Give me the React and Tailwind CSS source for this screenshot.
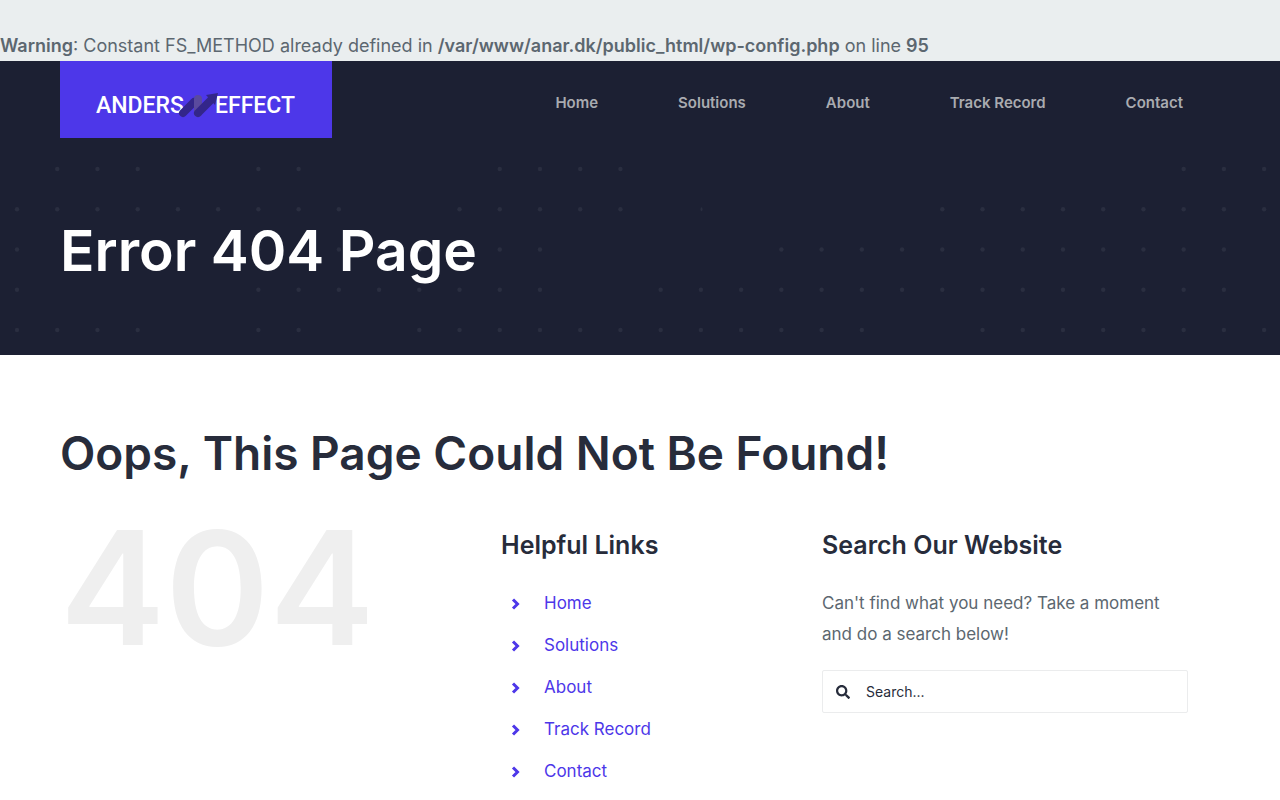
import { FaSearch } from 'react-icons/fa';

const LINKS = ['Home', 'Solutions', 'About', 'Track Record', 'Contact'];

// Dot columns per row of the title bar pattern, as [first, last] ranges
const DOT_ROWS = [
  [[1, 3], [6, 7], [12, 15], [29, 31]],
  [[0, 8], [11, 15], [23, 31]],
  [[0, 0], [6, 13], [19, 30]],
  [[0, 0], [6, 13], [16, 30]],
  [[0, 3], [6, 7], [10, 21], [24, 31]],
];

function DotPattern() {
  return (
    <svg
      viewBox="0 0 1280 294"
      preserveAspectRatio="xMidYMid slice"
      className="absolute inset-0 w-full h-full"
      aria-hidden="true"
    >
      {DOT_ROWS.map((ranges, row) =>
        ranges.map(([first, last]) =>
          Array.from({ length: last - first + 1 }, (_, i) => (
            <circle
              key={`${row}-${first + i}`}
              cx={17 + (first + i) * 40.23}
              cy={108 + row * 40.25}
              r="2.2"
              fill="#2a2e40"
            />
          ))
        )
      )}
      <ellipse cx="701.5" cy="148.2" rx="1" ry="2" fill="#2a2e40" />
    </svg>
  );
}

function Chevron() {
  return (
    <svg viewBox="0 0 12 12" className="size-3" fill="none" stroke="currentColor" strokeWidth="3" aria-hidden="true">
      <path d="M2 1.5L6.5 6L2 10.5" />
    </svg>
  );
}

function Logo() {
  return (
    <a href="#" aria-label="Anders Effect" className="block bg-[#4d37e9] w-[272px] h-[77px] px-9 pt-[10px]">
      <svg viewBox="0 0 200 67" className="w-full h-full">
        <g fill="#fff" fontFamily="Roboto, sans-serif" fontSize="23" fontWeight="500">
          <text x="0" y="42">ANDERS</text>
          <text x="119" y="42">EFFECT</text>
        </g>
        <g strokeLinecap="round" strokeWidth="8">
          <path d="M87 42L98 31" stroke="#33268a" />
          <path d="M102 42V28" stroke="#5a4a9e" />
          <path d="M102 42L115 29" stroke="#33268a" />
        </g>
        <path d="M110 24L122 22L119 34Z" fill="#33268a" />
      </svg>
    </a>
  );
}

function Header() {
  return (
    <header className="relative px-[60px] flex items-start justify-between">
      <Logo />
      <nav className="flex gap-20 pr-[37px] pt-[30px]">
        {LINKS.map((link) => (
          <a key={link} href="#" className="text-[15px] leading-6 font-semibold text-[#a9abb0] hover:text-white">
            {link}
          </a>
        ))}
      </nav>
    </header>
  );
}

function HelpfulLinks() {
  return (
    <section>
      <h2 className="text-[25px] leading-9 font-semibold text-[#272c3b]">Helpful Links</h2>
      <ul className="mt-5">
        {LINKS.map((link) => (
          <li key={link} className="flex items-center h-[42px] pl-[10px] gap-[21px] text-[#4d37e9]">
            <Chevron />
            <a href="#" className="text-[17px] hover:underline">{link}</a>
          </li>
        ))}
      </ul>
    </section>
  );
}

function SearchBox() {
  return (
    <section className="pr-8">
      <h2 className="text-[25px] leading-9 font-semibold text-[#272c3b]">Search Our Website</h2>
      <p className="mt-[25px] text-[17px] leading-[31px] text-[#5c6770]">
        Can't find what you need? Take a moment and do a search below!
      </p>
      <form className="mt-5 flex items-center h-[43px] border border-[#ebeced] rounded-xs" onSubmit={(e) => e.preventDefault()}>
        <button type="submit" aria-label="Search" className="pl-[13px] pr-4 text-[#272c3b]">
          <FaSearch className="size-[14px]" />
        </button>
        <input
          type="text"
          aria-label="Search"
          placeholder="Search..."
          className="w-full h-full text-[14px] text-[#272c3b] placeholder:text-[#272c3b] outline-none"
        />
      </form>
    </section>
  );
}

export default function App() {
  return (
    <div className="min-h-screen bg-white font-['Inter',sans-serif]">
      <p className="bg-[#eaeeef] pt-[30px] text-lg leading-[31px] text-[#5c6770]">
        <b className="font-semibold">Warning</b>: Constant FS_METHOD already defined in{' '}
        <b className="font-semibold">/var/www/anar.dk/public_html/wp-config.php</b> on line{' '}
        <b className="font-semibold">95</b>
      </p>

      <div className="relative bg-[#1c2033] pb-[66px]">
        <DotPattern />
        <Header />
        <h1 className="relative px-[60px] pt-[75px] text-[57px] leading-[76px] font-semibold text-white">
          Error 404 Page
        </h1>
      </div>

      <main className="px-[60px] pt-[68px]">
        <h2 className="text-[46px] leading-[60px] font-semibold text-[#272c3b]">
          Oops, This Page Could Not Be Found!
        </h2>
        <div className="grid grid-cols-[441fr_321fr_398fr] mt-11">
          <div className="text-[158px] leading-[122px] font-semibold text-[#efefef]">404</div>
          <HelpfulLinks />
          <SearchBox />
        </div>
      </main>
    </div>
  );
}
